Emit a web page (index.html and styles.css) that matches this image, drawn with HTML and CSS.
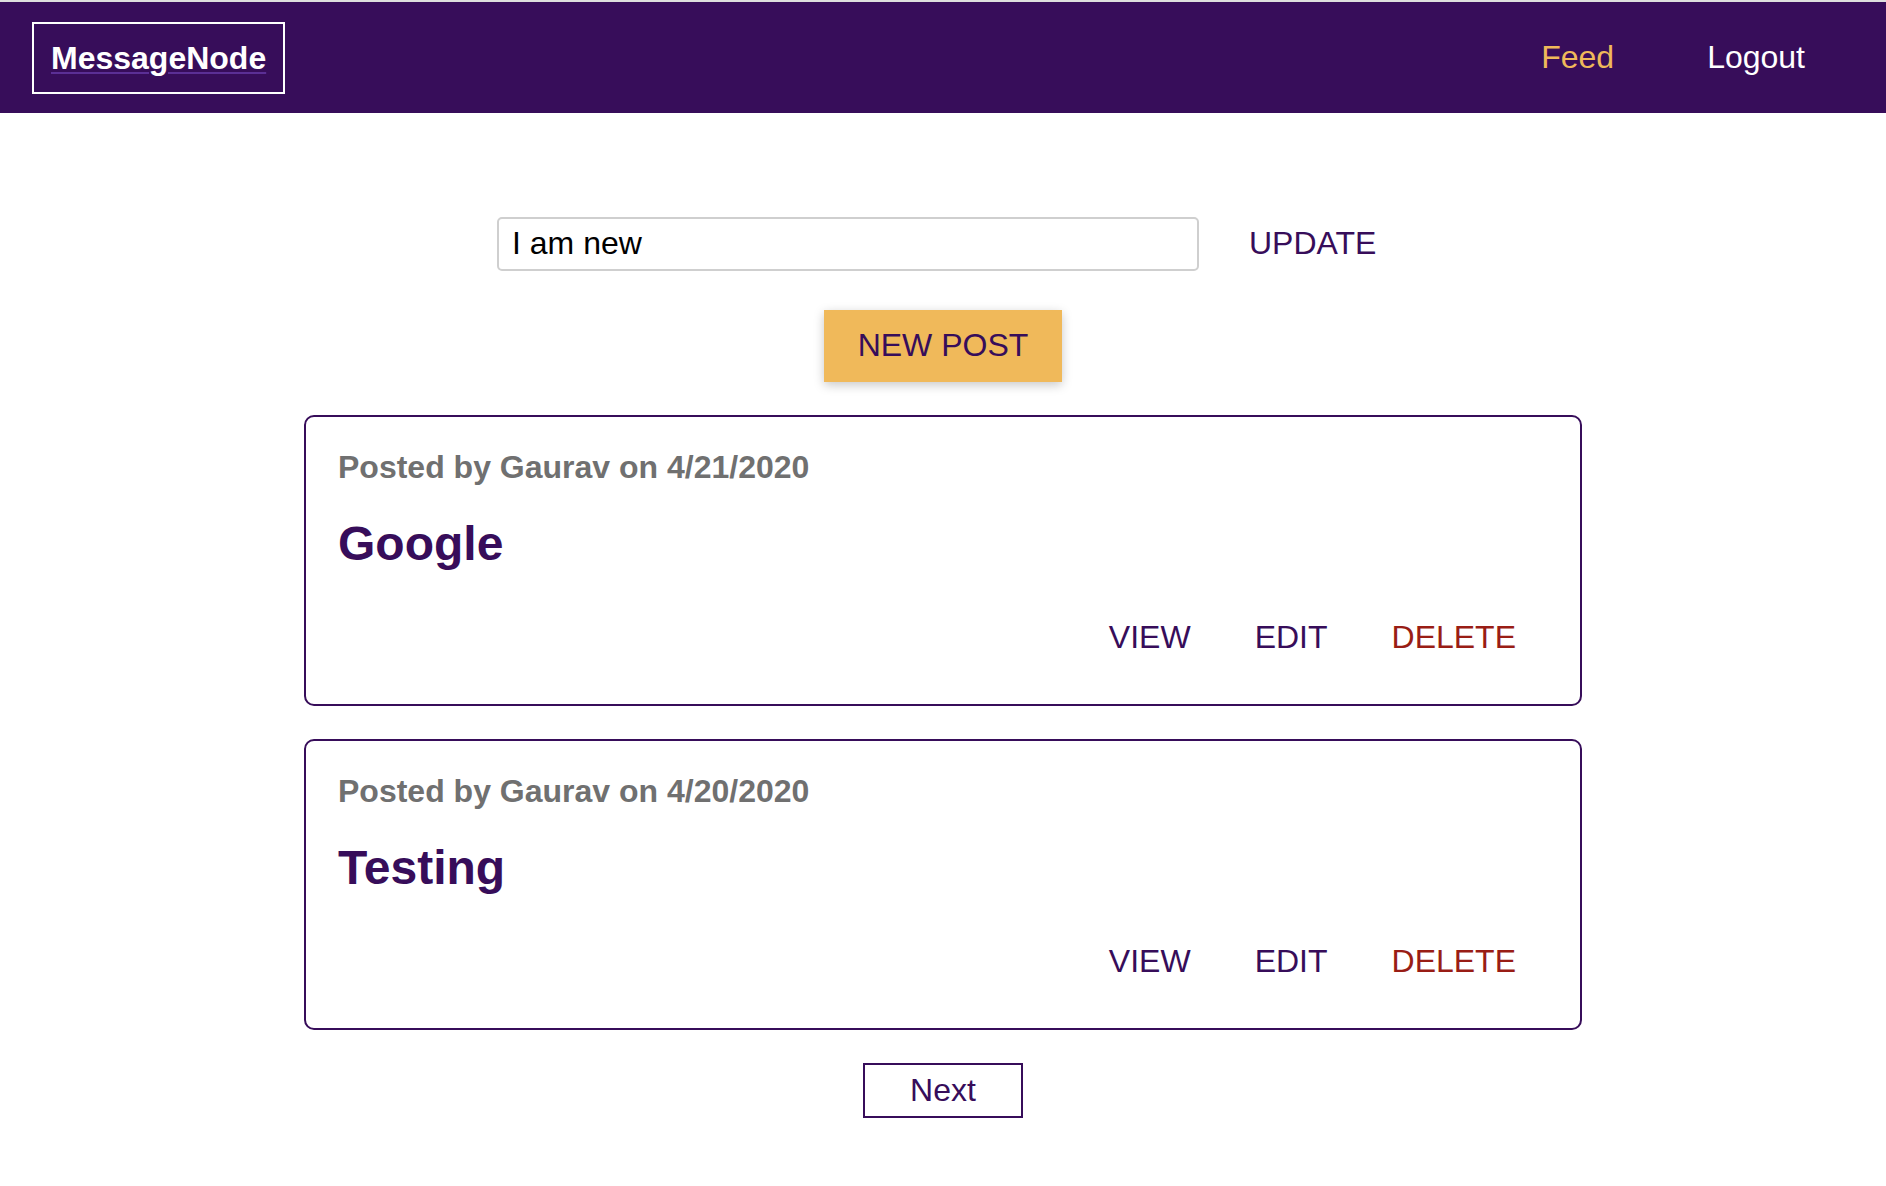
FILE: index.html
```html
<!DOCTYPE html>
<html lang="en">
<head>
<meta charset="utf-8">
<title>MessageNode</title>
<link rel="stylesheet" href="styles.css">
</head>
<body>
<header class="main-header">
  <div class="logo"><a href="#" class="logo-link">MessageNode</a></div>
  <nav class="main-nav">
    <ul class="nav-list">
      <li class="nav-item"><a href="#" class="nav-link nav-link--active">Feed</a></li>
      <li class="nav-item"><a href="#" class="nav-link">Logout</a></li>
    </ul>
  </nav>
</header>
<main class="feed">
  <section class="feed-status">
    <form class="status-form">
      <input class="status-input" type="text" value="I am new">
      <button type="button" class="btn-flat">UPDATE</button>
    </form>
  </section>
  <section class="feed-control">
    <button type="button" class="btn-accent">NEW POST</button>
  </section>
  <section class="posts">
    <article class="post">
      <h3 class="post-meta">Posted by Gaurav on 4/21/2020</h3>
      <h1 class="post-title">Google</h1>
      <div class="post-actions">
        <button type="button" class="btn-flat">VIEW</button>
        <button type="button" class="btn-flat">EDIT</button>
        <button type="button" class="btn-flat btn-danger">DELETE</button>
      </div>
    </article>
    <article class="post">
      <h3 class="post-meta">Posted by Gaurav on 4/20/2020</h3>
      <h1 class="post-title">Testing</h1>
      <div class="post-actions">
        <button type="button" class="btn-flat">VIEW</button>
        <button type="button" class="btn-flat">EDIT</button>
        <button type="button" class="btn-flat btn-danger">DELETE</button>
      </div>
    </article>
  </section>
  <div class="paginator">
    <button type="button" class="btn-outline">Next</button>
  </div>
</main>
</body>
</html>
```

FILE: styles.css
```css
* { box-sizing: border-box; }

html, body {
  margin: 0;
  padding: 0;
  background: #ffffff;
  font-family: "Liberation Sans", Arial, Helvetica, sans-serif;
  font-size: 32px;
}

.main-header {
  height: 113px;
  border-top: 2px solid #dedede;
  background: #370d5a;
  display: flex;
  align-items: center;
  justify-content: space-between;
  padding: 0 32px;
}

.logo {
  border: 2px solid #ffffff;
  padding: 15px 17px 15px 17px;
  line-height: 38px;
}

.logo-link {
  color: #ffffff;
  font-weight: bold;
  font-size: 32px;
  text-decoration: underline;
  text-decoration-color: #5b2f95;
  text-decoration-thickness: 2px;
  text-underline-offset: 3px;
}

.nav-list {
  list-style: none;
  margin: 0;
  padding: 0;
  display: flex;
}

.nav-item {
  margin: 0 49px;
}

.nav-item:first-child {
  margin-right: 44px;
}

.nav-link {
  color: #ffffff;
  text-decoration: none;
  font-size: 32px;
}

.nav-link--active {
  color: #f0b95a;
}

.feed-status {
  width: 960px;
  margin: 96px auto 0;
}

.status-form {
  display: flex;
  align-items: center;
  margin: 0;
}

.status-input {
  width: 702px;
  height: 54px;
  margin-left: 34px;
  border: 2px solid #cfcfcf;
  border-radius: 5px;
  padding: 6px 13px;
  font: inherit;
  font-size: 32px;
  color: #000000;
  outline: none;
}

.btn-flat {
  font: inherit;
  font-size: 32px;
  line-height: 37px;
  background: transparent;
  border: none;
  color: #370d5a;
  padding: 16px 32px;
  cursor: pointer;
}

.status-form .btn-flat {
  margin-left: 18px;
}

.btn-danger {
  color: #991d15;
}

.feed-control {
  display: flex;
  justify-content: center;
  margin-top: 32px;
}

.btn-accent {
  font: inherit;
  font-size: 32px;
  line-height: 37px;
  background: #f0b95a;
  color: #370d5a;
  border: none;
  padding: 17px 34px 18px;
  box-shadow: 0 3px 10px rgba(0, 0, 0, 0.22);
  cursor: pointer;
}

.posts {
  width: 1278px;
  margin: 33px auto 0;
  display: flex;
  flex-direction: column;
  gap: 33px;
}

.post {
  border: 2px solid #370d5a;
  border-radius: 10px;
  padding: 32px;
}

.post-meta {
  margin: 0;
  font-size: 32px;
  line-height: 37px;
  font-weight: bold;
  color: #707070;
}

.post-title {
  margin: 30px 0 32px;
  font-size: 48px;
  line-height: 55px;
  font-weight: bold;
  color: #370d5a;
}

.post-actions {
  display: flex;
  justify-content: flex-end;
}

.paginator {
  display: flex;
  justify-content: center;
  margin-top: 33px;
  padding-bottom: 40px;
}

.btn-outline {
  font: inherit;
  font-size: 32px;
  line-height: 37px;
  background: #ffffff;
  color: #370d5a;
  border: 2px solid #370d5a;
  padding: 7px 45px;
  cursor: pointer;
}
```
